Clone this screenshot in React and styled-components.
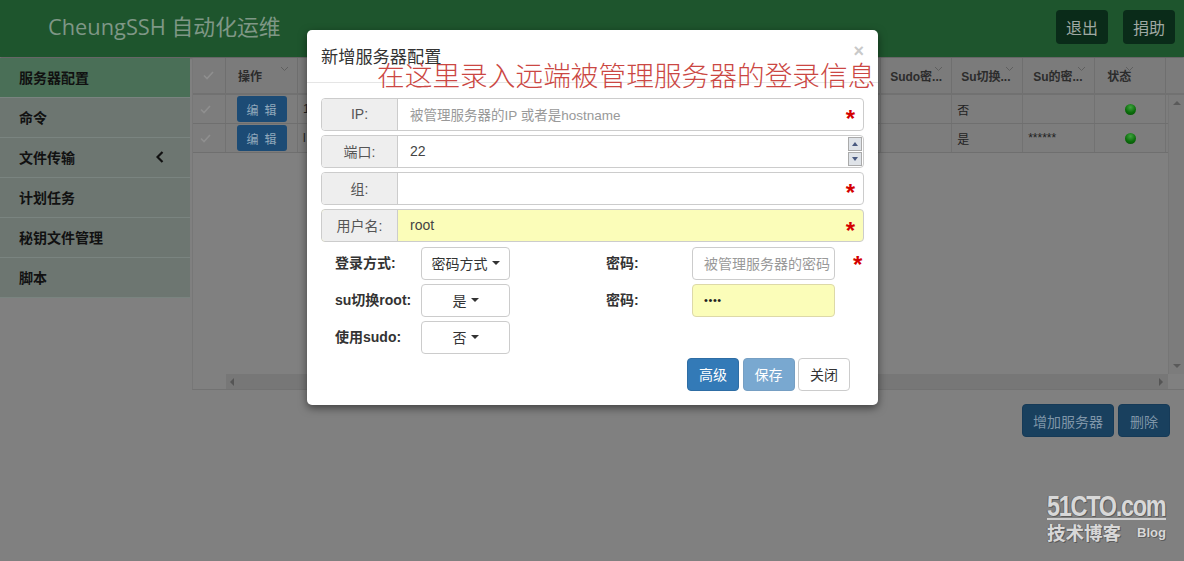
import React from "react";
import styled, { createGlobalStyle } from "styled-components";

const SANS = `"Liberation Sans", "Noto Sans CJK SC", sans-serif`;

const Global = createGlobalStyle`
  html, body { margin: 0; padding: 0; background: #808080; }
  * { box-sizing: border-box; }
  body { font-family: ${SANS}; font-size: 14px; }
`;

const Page = styled.div`
  position: relative;
  width: 1184px;
  height: 561px;
  overflow: hidden;
  background: #808080;
`;

const TopBar = styled.header`
  height: 57px;
  background: #1e552d;
  display: flex;
  align-items: flex-start;
  padding: 10px 9px 0 48px;
  gap: 15px;
  box-shadow: 0 1px 2px rgba(0, 0, 0, 0.3);
`;

const Brand = styled.div`
  flex: 1;
  font-family: "Open Sans", "Noto Sans CJK SC", sans-serif;
  font-size: 21.8px;
  line-height: 34px;
  color: #7f9786;
`;

const TopButton = styled.button`
  width: 52px;
  height: 34px;
  padding: 0;
  border: 0;
  border-radius: 4px;
  background: #0a2b19;
  color: #9fa8a2;
  font: 16px ${SANS};
`;

const Body = styled.div`
  display: flex;
  height: 504px;
`;

const Side = styled.nav`
  width: 190px;
  padding-top: 1px;
  flex: none;
`;

const SideItem = styled.div`
  height: 40px;
  display: flex;
  align-items: center;
  justify-content: space-between;
  padding: 0 26px 2px 19px;
  font-weight: 700;
  font-size: 14px;
  color: #111;
  background: ${(p) => (p.$active ? "#4a6f57" : "#6d7671")};
  border-bottom: 1px solid #7a8480;
`;

const Main = styled.main`
  flex: 1;
  min-width: 0;
  padding: 1px 0 0 2px;
  display: flex;
  flex-direction: column;
`;

const GridPanel = styled.section`
  height: 332px;
  border-bottom: 1px solid #727272;
  border-left: 1px solid #777;
  display: flex;
  flex-direction: column;
`;

const COLUMNS = "33px 72px repeat(8, 72.9px) 71px 71px 72px 71px 17px";

const HeadRow = styled.div`
  display: grid;
  grid-template-columns: ${COLUMNS};
  height: 37px;
  background: #7b7b7b;
  border-bottom: 2px solid #717171;
`;

const HeadCell = styled.div`
  position: relative;
  border-right: 1px solid #6f6f6f;
  display: flex;
  align-items: center;
  padding-left: ${(p) => p.$pad}px;
  font-size: 12px;
  font-weight: 700;
  color: #2c2c2c;
  white-space: nowrap;
  overflow: hidden;
`;

const SortMark = styled.svg`
  position: absolute;
  top: 8px;
  right: ${(p) => p.$right}px;
  width: 9px;
  height: 6px;
`;

const Content = styled.div`
  flex: 1;
  display: flex;
  min-height: 0;
`;

const Rows = styled.div`
  flex: 1;
  min-width: 0;
  display: flex;
  flex-direction: column;
`;

const Row = styled.div`
  display: grid;
  grid-template-columns: ${COLUMNS};
  height: 29px;
  background: #7d7d7d;
  border-bottom: 1px solid #6f6f6f;
`;

const Cell = styled.div`
  border-right: 1px solid #727272;
  display: flex;
  align-items: center;
  justify-content: ${(p) => (p.$center ? "center" : "flex-start")};
  padding: 0 0 0 ${(p) => (p.$center ? 0 : 5)}px;
  font-size: 12px;
  color: #222;
  white-space: nowrap;
  overflow: hidden;
`;

const TickCell = styled(Cell)`
  justify-content: flex-start;
  padding-left: 7px;
`;

const EditButton = styled.button`
  width: 50px;
  height: 26px;
  margin-left: 6px;
  padding: 0 0 0 5px;
  border: 0;
  border-radius: 3px;
  background: #1c4b75;
  color: #92a9bc;
  font: 12px ${SANS};
  letter-spacing: 6px;
  white-space: nowrap;
`;

const Tick = () => (
  <svg width="11" height="9" viewBox="0 0 11 9" fill="none">
    <path d="M1 4.5 4 7.5 10 1" stroke="#8f8f8f" strokeWidth="1.6" />
  </svg>
);

const Lamp = styled.span`
  width: 11px;
  height: 11px;
  border-radius: 50%;
  background: radial-gradient(circle at 50% 30%, #3fa33f, #0b6f0b 55%, #054a05);
`;

const VTrack = styled.div`
  width: 0;
  flex: none;
  position: relative;
`;

const VBar = styled.div`
  position: absolute;
  top: 0;
  right: 0;
  bottom: 0;
  width: 16px;
  background: #7c7c7c;
  border-left: 1px solid #767676;
  display: flex;
  flex-direction: column;
  justify-content: space-between;
  align-items: center;
  padding: 6px 0;
`;

const HTrack = styled.div`
  height: 15px;
  margin-left: 33px;
  display: flex;
  align-items: center;
  justify-content: space-between;
  background: #777;
  padding: 0 0 0 4px;
`;

const Corner = styled.div`
  width: 16px;
  height: 15px;
  background: #808080;
`;

const Arrow = styled.span`
  width: 0;
  height: 0;
  border: 4px solid transparent;
  ${(p) =>
    p.$dir === "up" && "border-top: 0; border-bottom: 4px solid #5a5a5a;"}
  ${(p) =>
    p.$dir === "down" && "border-bottom: 0; border-top: 4px solid #5a5a5a;"}
  ${(p) =>
    p.$dir === "left" && "border-left: 0; border-right: 4px solid #555;"}
  ${(p) =>
    p.$dir === "right" && "border-right: 0; border-left: 4px solid #555; margin-left: auto; margin-right: 5px;"}
`;

const GridActions = styled.div`
  display: flex;
  justify-content: flex-end;
  gap: 4px;
  padding: 14px 14px 0 0;
`;

const DimButton = styled.button`
  height: 33px;
  width: ${(p) => p.$w}px;
  padding: 0;
  border: 1px solid #163a57;
  border-radius: 4px;
  background: #19405e;
  color: #7f95a8;
  font: 14px ${SANS};
`;

const Modal = styled.div`
  position: absolute;
  left: 307px;
  top: 30px;
  width: 571px;
  height: 375px;
  background: #fff;
  border-radius: 5px;
  box-shadow: 0 3px 9px rgba(0, 0, 0, 0.5);
`;

const ModalHead = styled.div`
  height: 53px;
  padding: 16px 14px 0;
  border-bottom: 1px solid #e5e5e5;
  font-size: 17.2px;
  line-height: 22px;
  color: #333;
`;

const CloseMark = styled.span`
  position: absolute;
  top: 11px;
  right: 14px;
  font-size: 18px;
  line-height: 20px;
  font-weight: 700;
  color: #c9c9c9;
`;

const Callout = styled.div`
  position: absolute;
  left: 70px;
  top: 26px;
  font-family: "Noto Sans CJK SC", sans-serif;
  font-size: 27.7px;
  line-height: 36px;
  font-weight: 300;
  white-space: nowrap;
  color: #cb4743;
`;

const ModalBody = styled.div`
  padding: 15px 14px 0;
`;

const Field = styled.div`
  position: relative;
  display: flex;
  width: 543px;
  height: ${(p) => (p.$tall ? 33 : 32.5)}px;
  margin-bottom: 4.5px;
  border: 1px solid #ccc;
  border-radius: 4px;
  background: ${(p) => (p.$filled ? "#fbfdb9" : "#fff")};
`;

const FieldLabel = styled.div`
  width: 76px;
  flex: none;
  display: flex;
  align-items: center;
  justify-content: center;
  padding-bottom: 1px;
  background: #eee;
  border-right: 1px solid #ccc;
  border-radius: 3px 0 0 3px;
  color: #555;
  font-size: 14px;
`;

const FieldValue = styled.div`
  flex: 1;
  display: flex;
  align-items: center;
  padding: 0 0 1px 12px;
  font-size: ${(p) => (p.$hint ? 13.5 : 14)}px;
  color: ${(p) => (p.$hint ? "#999" : "#444")};
`;

const Required = styled.span`
  position: absolute;
  right: 8px;
  top: 50%;
  margin-top: -7px;
  font: 700 24px/24px ${SANS};
  color: #d40000;
`;

const Spinner = styled.div`
  width: 14px;
  margin: 1px;
  flex: none;
  display: flex;
  flex-direction: column;
  gap: 1px;
`;

const SpinButton = styled.div`
  flex: 1;
  display: flex;
  align-items: center;
  justify-content: center;
  background: #dfe3e8;
  border: 1px solid #aaa;
  & > svg { display: block; }
`;

const OptionGrid = styled.div`
  display: grid;
  grid-template-columns: 86px 89px 96px 86px 143px 23px;
  grid-auto-rows: 33px;
  row-gap: 4px;
  padding: 0 0 0 14px;
`;

const OptionLabel = styled.div`
  display: flex;
  align-items: center;
  height: 30px;
  font-size: 14px;
  font-weight: 700;
  color: #333;
  white-space: nowrap;
`;

const Dropdown = styled.div`
  display: flex;
  align-items: center;
  justify-content: center;
  gap: 4px;
  border: 1px solid #ccc;
  border-radius: 4px;
  font-size: 14px;
  color: #333;
`;

const Caret = styled.span`
  border-left: 4px solid transparent;
  border-right: 4px solid transparent;
  border-top: 4px solid #333;
`;

const TextBox = styled.div`
  display: flex;
  align-items: center;
  padding-left: 11px;
  border: 1px solid ${(p) => (p.$filled ? "#ddd9a8" : "#ccc")};
  border-radius: 4px;
  font-size: ${(p) => (p.$filled ? 11 : 14)}px;
  letter-spacing: ${(p) => (p.$filled ? 0.6 : 0)}px;
  white-space: nowrap;
  overflow: hidden;
  color: ${(p) => (p.$filled ? "#222" : "#999")};
  background: ${(p) => (p.$filled ? "#fbfdb9" : "#fff")};
`;

const OuterStar = styled.div`
  font: 700 24px/30px ${SANS};
  padding: 3px 0 0 18px;
  color: #d40000;
`;

const Footer = styled.div`
  display: flex;
  justify-content: flex-end;
  gap: 3.5px;
  padding-right: 14px;
  margin-top: 4px;
`;

const ModalButton = styled.button`
  width: 52px;
  height: 33px;
  padding: 0;
  border-radius: 4px;
  font: 14px ${SANS};
  border: 1px solid ${(p) => (p.$kind === "plain" ? "#ccc" : "#2e6da4")};
  color: ${(p) => (p.$kind === "plain" ? "#333" : "#fff")};
  background: ${(p) => (p.$kind === "plain" ? "#fff" : "#337ab7")};
  opacity: ${(p) => (p.$kind === "muted" ? 0.65 : 1)};
`;

const Stamp = styled.div`
  position: absolute;
  left: 1047px;
  top: 490px;
  width: 119px;
  color: #d8d8d8;
  text-shadow: 1px 1px 0 #5c5c5c, -1px 0 0 #6a6a6a;
`;

const StampLogo = styled.div`
  height: 30px;
  border-bottom: 2px solid #cfcfcf;
`;

const StampLogoText = styled.span`
  display: inline-block;
  font: 700 26px/28px "Liberation Sans", sans-serif;
  letter-spacing: -1.4px;
  white-space: nowrap;
  transform: scale(0.9, 1.12);
  transform-origin: 0 0;
`;

const StampRow = styled.div`
  display: flex;
  justify-content: space-between;
  align-items: flex-start;
  margin-top: 3px;
`;

const StampCjk = styled.span`
  font-size: 18.5px;
  line-height: 22px;
  font-weight: 700;
`;

const StampBlog = styled.span`
  font: 700 13px/20px "Liberation Sans", sans-serif;
`;

const HRow = styled.div`
  display: flex;
`;

const HGrow = styled.div`
  flex: 1;
`;

const SIDE = ["服务器配置", "命令", "文件传输", "计划任务", "秘钥文件管理", "脚本"];

const HEADS = [
  { text: "", pad: 10, right: 8 },
  { text: "", pad: 10, right: 8 },
  { text: "", pad: 10, right: 8 },
  { text: "", pad: 10, right: 8 },
  { text: "", pad: 10, right: 8 },
  { text: "", pad: 10, right: 8 },
  { text: "", pad: 10, right: 8 },
  { text: "", pad: 10, right: 8 },
  { text: "Sudo密...", pad: 9, right: 8 },
  { text: "Su切换...", pad: 9, right: 8 },
  { text: "Su的密...", pad: 10, right: 8 },
  { text: "状态", pad: 12, right: 31 },
];

const ROWS = [
  { ip: "1", su: "否", pwd: "" },
  { ip: "l", su: "是", pwd: "******" },
];

const Chevron = ({ right }) => (
  <SortMark $right={right} viewBox="0 0 9 6" fill="none">
    <path d="M1 1 4.5 4.5 8 1" stroke="#5f5f5f" strokeWidth="1" />
  </SortMark>
);

function ServerGrid() {
  return (
    <GridPanel>
      <HeadRow>
        <HeadCell $pad={10}>
          <Tick />
        </HeadCell>
        <HeadCell $pad={12}>
          操作
          <Chevron right={8} />
        </HeadCell>
        {HEADS.map((h, i) => (
          <HeadCell key={i} $pad={h.pad}>
            {h.text}
            <Chevron right={h.right} />
          </HeadCell>
        ))}
        <span />
      </HeadRow>
      <Content>
        <Rows>
          {ROWS.map((r, i) => (
            <Row key={i}>
              <TickCell>
                <Tick />
              </TickCell>
              <Cell>
                <EditButton>编辑</EditButton>
              </Cell>
              <Cell>{r.ip}</Cell>
              <Cell />
              <Cell />
              <Cell />
              <Cell />
              <Cell />
              <Cell />
              <Cell />
              <Cell />
              <Cell>{r.su}</Cell>
              <Cell>{r.pwd}</Cell>
              <Cell $center>
                <Lamp />
              </Cell>
            </Row>
          ))}
        </Rows>
        <VTrack>
          <VBar>
            <Arrow $dir="up" />
            <Arrow $dir="down" />
          </VBar>
        </VTrack>
      </Content>
      <HRow>
        <HGrow>
          <HTrack>
            <Arrow $dir="left" />
            <Arrow $dir="right" />
          </HTrack>
        </HGrow>
        <Corner />
      </HRow>
    </GridPanel>
  );
}

function ServerDialog() {
  return (
    <Modal>
      <ModalHead>新增服务器配置</ModalHead>
      <CloseMark>×</CloseMark>
      <Callout>在这里录入远端被管理服务器的登录信息</Callout>
      <ModalBody>
        <Field>
          <FieldLabel>IP:</FieldLabel>
          <FieldValue $hint>被管理服务器的IP 或者是hostname</FieldValue>
          <Required>*</Required>
        </Field>
        <Field>
          <FieldLabel>端口:</FieldLabel>
          <FieldValue>22</FieldValue>
          <Spinner>
            <SpinButton>
              <svg width="6" height="4" viewBox="0 0 6 4">
                <path d="M3 0 6 4H0z" fill="#4a5a80" />
              </svg>
            </SpinButton>
            <SpinButton>
              <svg width="6" height="4" viewBox="0 0 6 4">
                <path d="M0 0H6L3 4z" fill="#4a5a80" />
              </svg>
            </SpinButton>
          </Spinner>
        </Field>
        <Field>
          <FieldLabel>组:</FieldLabel>
          <FieldValue />
          <Required>*</Required>
        </Field>
        <Field $filled $tall>
          <FieldLabel>用户名:</FieldLabel>
          <FieldValue>root</FieldValue>
          <Required>*</Required>
        </Field>
        <OptionGrid>
          <OptionLabel>登录方式:</OptionLabel>
          <Dropdown>
            密码方式 <Caret />
          </Dropdown>
          <span />
          <OptionLabel>密码:</OptionLabel>
          <TextBox>被管理服务器的密码</TextBox>
          <OuterStar>*</OuterStar>

          <OptionLabel>su切换root:</OptionLabel>
          <Dropdown>
            是 <Caret />
          </Dropdown>
          <span />
          <OptionLabel>密码:</OptionLabel>
          <TextBox $filled>••••</TextBox>
          <span />

          <OptionLabel>使用sudo:</OptionLabel>
          <Dropdown>
            否 <Caret />
          </Dropdown>
        </OptionGrid>
        <Footer>
          <ModalButton>高级</ModalButton>
          <ModalButton $kind="muted">保存</ModalButton>
          <ModalButton $kind="plain">关闭</ModalButton>
        </Footer>
      </ModalBody>
    </Modal>
  );
}

export default function App() {
  return (
    <Page>
      <Global />
      <TopBar>
        <Brand>CheungSSH 自动化运维</Brand>
        <TopButton>退出</TopButton>
        <TopButton>捐助</TopButton>
      </TopBar>
      <Body>
        <Side>
          {SIDE.map((label, i) => (
            <SideItem key={label} $active={i === 0}>
              {label}
              {label === "文件传输" && (
                <svg width="8" height="12" viewBox="0 0 8 12" fill="none">
                  <path d="M6.5 1 1.5 6l5 5" stroke="#111" strokeWidth="2.2" />
                </svg>
              )}
            </SideItem>
          ))}
        </Side>
        <Main>
          <ServerGrid />
          <GridActions>
            <DimButton $w={92}>增加服务器</DimButton>
            <DimButton $w={52}>删除</DimButton>
          </GridActions>
        </Main>
      </Body>
      <ServerDialog />
      <Stamp>
        <StampLogo>
          <StampLogoText>51CTO.com</StampLogoText>
        </StampLogo>
        <StampRow>
          <StampCjk>技术博客</StampCjk>
          <StampBlog>Blog</StampBlog>
        </StampRow>
      </Stamp>
    </Page>
  );
}
